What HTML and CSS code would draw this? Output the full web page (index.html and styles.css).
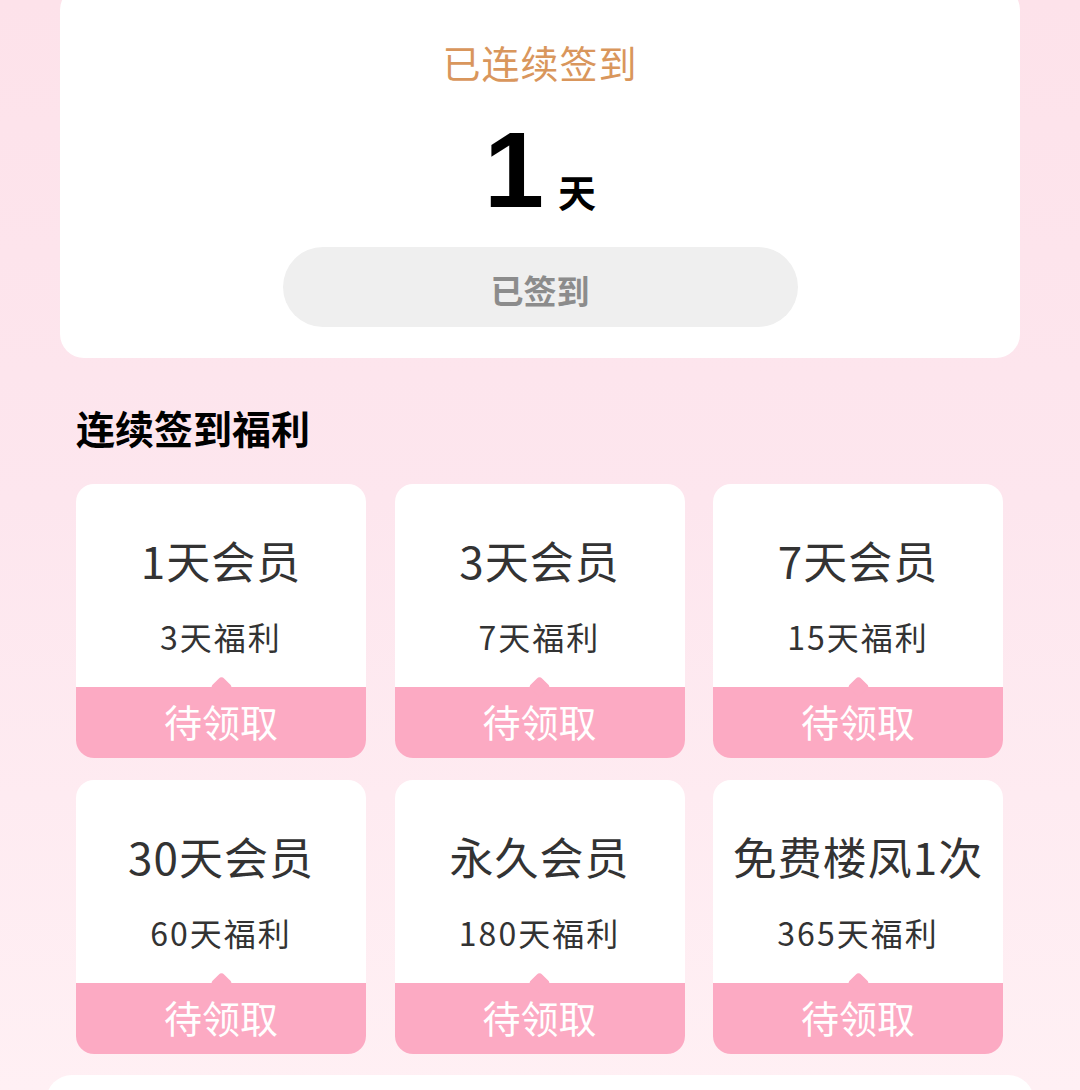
FILE: index.html
```html
<!DOCTYPE html>
<html lang="zh-CN">
<head>
<meta charset="utf-8">
<title>签到</title>
<link rel="stylesheet" href="styles.css">
</head>
<body>
<div class="page">
  <section class="sign-card">
    <div class="sign-title">已连续签到</div>
    <div class="sign-count">
      <span class="count-num">1</span>
      <span class="count-unit">天</span>
    </div>
    <div class="sign-btn">已签到</div>
  </section>

  <section class="rewards">
    <h2 class="rewards-title">连续签到福利</h2>
    <div class="reward-grid">
      <div class="reward">
        <div class="reward-name">1天会员</div>
        <div class="reward-cond">3天福利</div>
        <div class="reward-bar">待领取</div>
      </div>
      <div class="reward">
        <div class="reward-name">3天会员</div>
        <div class="reward-cond">7天福利</div>
        <div class="reward-bar">待领取</div>
      </div>
      <div class="reward">
        <div class="reward-name">7天会员</div>
        <div class="reward-cond">15天福利</div>
        <div class="reward-bar">待领取</div>
      </div>
      <div class="reward">
        <div class="reward-name">30天会员</div>
        <div class="reward-cond">60天福利</div>
        <div class="reward-bar">待领取</div>
      </div>
      <div class="reward">
        <div class="reward-name">永久会员</div>
        <div class="reward-cond">180天福利</div>
        <div class="reward-bar">待领取</div>
      </div>
      <div class="reward">
        <div class="reward-name">免费楼凤1次</div>
        <div class="reward-cond">365天福利</div>
        <div class="reward-bar">待领取</div>
      </div>
    </div>
  </section>

  <section class="next-card"></section>
</div>
</body>
</html>
```

FILE: styles.css
```css
* { box-sizing: border-box; }

html, body {
  margin: 0;
  padding: 0;
}

body {
  width: 1080px;
  height: 1090px;
  overflow: hidden;
  font-family: "Noto Sans CJK SC", "Noto Sans", sans-serif;
  background: linear-gradient(180deg, #fde2ea 0px, #fde6ee 500px, #fff0f4 1090px);
}

.page {
  display: flex;
  flex-direction: column;
}

.sign-card {
  margin: -14px 60px 0;
  height: 372px;
  background: #ffffff;
  border-radius: 24px;
  padding-top: 51px;
  display: flex;
  flex-direction: column;
  align-items: center;
}

.sign-title {
  font-size: 38px;
  line-height: 50px;
  letter-spacing: 1px;
  color: #d9965c;
}

.sign-count {
  margin-top: 29px;
  display: flex;
  align-items: baseline;
  justify-content: center;
  height: 109px;
}

.count-num {
  font-family: "Liberation Sans", "Roboto", sans-serif;
  font-weight: 700;
  font-size: 108px;
  line-height: 1;
  color: #000;
}

.count-unit {
  margin-left: 14px;
  font-size: 38px;
  font-weight: 700;
  color: #000;
}

.sign-btn {
  margin-top: 22px;
  width: 515px;
  height: 80px;
  border-radius: 40px;
  background: #efefef;
  color: #8c8c8c;
  font-size: 33px;
  font-weight: 700;
  padding-top: 5px;
  display: flex;
  align-items: center;
  justify-content: center;
}

.rewards {
  padding: 0 77px 0 76px;
}

.rewards-title {
  margin: 44px 0 0;
  font-size: 39px;
  line-height: 50px;
  font-weight: 700;
  color: #000;
}

.reward-grid {
  margin-top: 32px;
  display: grid;
  grid-template-columns: repeat(3, 290px);
  column-gap: 28.5px;
  row-gap: 22px;
}

.reward {
  height: 274px;
  background: #ffffff;
  border-radius: 18px;
  overflow: hidden;
  display: flex;
  flex-direction: column;
  align-items: center;
  padding-top: 48px;
}

.reward-name {
  font-size: 44px;
  line-height: 56px;
  letter-spacing: 1px;
  color: #333333;
  white-space: nowrap;
}

.reward-cond {
  margin-top: 28px;
  font-size: 32px;
  line-height: 40px;
  letter-spacing: 2px;
  color: #333333;
}

.reward-bar {
  position: relative;
  margin-top: auto;
  width: 100%;
  height: 71px;
  background: #fcaac3;
  color: #ffffff;
  font-size: 38px;
  padding-bottom: 5px;
  display: flex;
  align-items: center;
  justify-content: center;
}

.reward-bar::before {
  content: "";
  position: absolute;
  left: 50%;
  top: -8px;
  width: 15px;
  height: 15px;
  margin-left: -7.5px;
  background: #fcaac3;
  border-radius: 4px 2px 2px 2px;
  transform: rotate(45deg);
}

.next-card {
  margin: 21px 46px 0;
  height: 80px;
  background: #ffffff;
  border-radius: 26px;
}
```
